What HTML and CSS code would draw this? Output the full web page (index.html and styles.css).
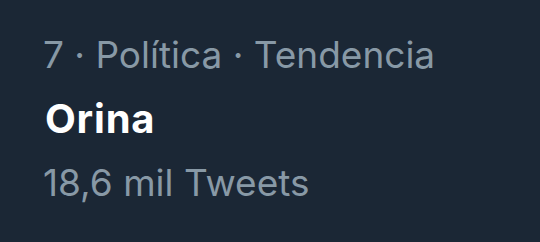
FILE: index.html
```html
<!DOCTYPE html>
<html lang="es">
<head>
    <meta charset="UTF-8">
    <meta name="viewport" content="width=device-width, initial-scale=1.0">
    <title>Tendencia</title>
    <link rel="stylesheet" href="styles.css">
</head>
<body>

    <div class="trend">
        <div class="trend-meta">7 · Política · Tendencia</div>
        <div class="trend-name">Orina</div>
        <div class="trend-count">18,6 mil Tweets</div>
    </div>

</body>
</html>
```

FILE: styles.css
```css
html,
body {
    margin: 0;
    height: 100%;
    background-color: #1b2735;
}

.trend {
    padding: 23px 44px 0 43px;
    font-family: "Inter", "Liberation Sans", sans-serif;
}

/* Lineas grises */
.trend-meta,
.trend-count {
    color: #8899a6;
    font-size: 37px;
    line-height: 64px;
}

.trend-name {
    color: #ffffff;
    font-size: 40px;
    font-weight: 700;
    letter-spacing: 0.8px;
    line-height: 64px;
    padding-left: 2px;
}
```
